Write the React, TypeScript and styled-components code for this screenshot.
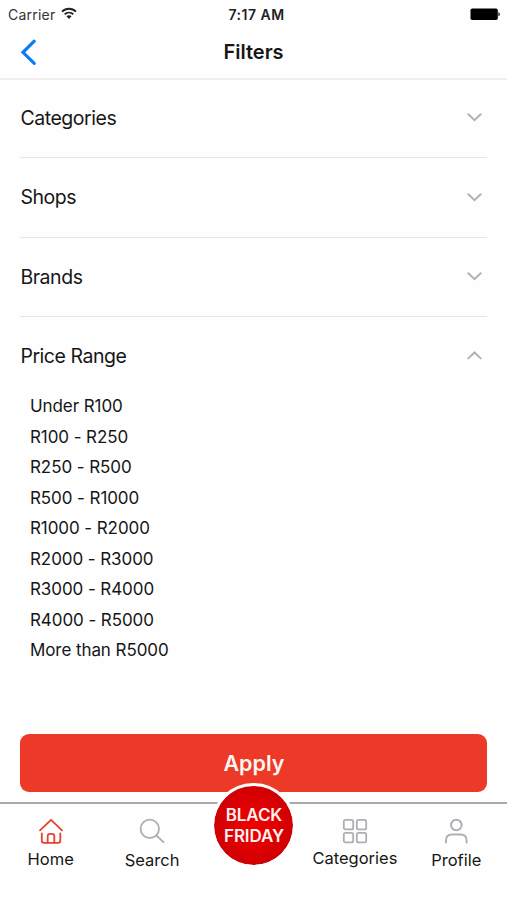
import React, { useState } from "react";
import styled, { createGlobalStyle } from "styled-components";

const GlobalStyle = createGlobalStyle`
  * { box-sizing: border-box; }
  body { margin: 0; background: #fefefe; }
  button { font: inherit; color: inherit; background: none; border: 0; padding: 0; text-align: left; }
`;

const Screen = styled.div`
  width: 507px;
  height: 900px;
  display: flex;
  flex-direction: column;
  overflow: hidden;
  background: #fefefe;
  color: #161616;
  font-family: Inter, "Liberation Sans", sans-serif;
`;

const StatusBar = styled.header`
  flex: none;
  height: 27px;
  display: grid;
  grid-template-columns: 1fr auto 1fr;
  align-items: center;
  padding: 1px 7px 0 8px;
`;

const Carrier = styled.div`
  display: flex;
  align-items: center;
  gap: 6px;
  font-size: 14px;
  letter-spacing: 0.22px;
  color: #333;

  svg {
    margin-top: -2px;
  }
`;

const Clock = styled.div`
  font-size: 14px;
  font-weight: 600;
  letter-spacing: 0.5px;
  color: #222;
  margin-left: 5px;
`;

const Battery = styled.svg`
  justify-self: end;
`;

const NavBar = styled.nav`
  flex: none;
  height: 53px;
  display: grid;
  grid-template-columns: 1fr auto 1fr;
  align-items: center;
  padding: 0 20px;
  padding-bottom: 2px;
  border-bottom: 2px solid #efefef;
`;

const BackButton = styled.button`
  height: 28px;
`;

const Title = styled.h1`
  margin: 0;
  font-size: 20px;
  font-weight: 600;
  line-height: 24px;
`;

const Content = styled.main`
  flex: 1;
  min-height: 0;
  display: flex;
  flex-direction: column;
  padding: 0 19.6px 0 20.4px;
`;

const SectionHeader = styled.button<{ $divided: boolean }>`
  flex: none;
  width: 100%;
  height: 79.3px;
  display: flex;
  align-items: center;
  justify-content: space-between;
  padding: ${(p) => (p.$divided ? "0 5.5px 0 0" : "0 5.5px 2px 0")};
  border-bottom: ${(p) => (p.$divided ? "1px solid #e6e6e8" : "0")};
  font-size: 19.5px;
  letter-spacing: -0.45px;
  line-height: 24px;

  &:first-child {
    height: 78.3px;
    padding-bottom: 2px;
  }
`;

const Options = styled.ul`
  list-style: none;
  margin: -5.3px 0 0;
  padding: 0 0 0 9.6px;
`;

const Option = styled.li`
  height: 30.5px;
  display: flex;
  align-items: center;
  font-size: 17px;
  letter-spacing: -0.08px;
`;

const ApplyButton = styled.button`
  flex: none;
  height: 58px;
  margin-top: auto;
  margin-bottom: 10px;
  border-radius: 9px;
  background: #ed3927;
  color: #fff6f2;
  font-size: 21.5px;
  font-weight: 600;
  text-align: center;
`;

const TabBar = styled.footer`
  flex: none;
  height: 98px;
  display: grid;
  grid-template-columns: repeat(5, 1fr);
  border-top: 2px solid #a9abad;
`;

const Tab = styled.button<{ $gap: number }>`
  display: flex;
  flex-direction: column;
  align-items: center;
  gap: ${(p) => p.$gap}px;
  padding-top: 14px;
  white-space: nowrap;
  font-size: 16.5px;
  line-height: 20px;
  height: 90px;
`;

const PromoSlot = styled.div`
  position: relative;
`;

const PromoBadge = styled.button`
  position: absolute;
  left: 50%;
  top: -21.5px;
  width: 85px;
  height: 85px;
  margin-left: -42px;
  border-radius: 50%;
  border: 3.5px solid #fefefe;
  background: radial-gradient(circle, #f00000 0%, #dc0003 45%, #b80006 100%) border-box;
  background-clip: padding-box;
  display: flex;
  align-items: center;
  justify-content: center;
  text-align: center;
  color: #fff0ee;
  font-size: 17px;
  font-weight: 600;
  letter-spacing: -0.1px;
  line-height: 21px;
  padding-top: 2px;
`;

const SECTIONS = ["Categories", "Shops", "Brands", "Price Range"];
const PRICES = [
  "Under R100",
  "R100 - R250",
  "R250 - R500",
  "R500 - R1000",
  "R1000 - R2000",
  "R2000 - R3000",
  "R3000 - R4000",
  "R4000 - R5000",
  "More than R5000",
];

const WifiIcon = () => (
  <svg width="16" height="13" viewBox="0 0 16 13" fill="none" stroke="#222" strokeWidth="1.9">
    <path d="M1 4.6C5 .7 11 .7 15 4.6" />
    <path d="M3.7 7.3C6.2 5 9.8 5 12.3 7.3" />
    <path d="M8 12 5.5 9.3C7 7.9 9 7.9 10.5 9.3Z" fill="#222" stroke="none" />
  </svg>
);

const Chevron = ({ open }: { open: boolean }) => (
  <svg width="15" height="9" viewBox="0 0 15 9" fill="none" stroke="#b1b1b5" strokeWidth="2" strokeLinecap="round">
    <path d={open ? "M1.3 7.4 7.5 1.5 13.7 7.4" : "M1.3 1.3 7.5 7.2 13.7 1.3"} />
  </svg>
);

const HomeIcon = () => (
  <svg width="26" height="26" viewBox="0 0 26 26" fill="none" stroke="#e5412f" strokeWidth="1.8" strokeLinecap="round" strokeLinejoin="round">
    <path d="M2 12.3 13 1.8 24 12.3" />
    <path d="M3.8 15.5V22.5Q3.8 24.8 6 24.8H20Q22.3 24.8 22.3 22.5V15.5" />
    <path d="M9.7 24.5V18Q9.7 15.8 12 15.8H14Q16.3 15.8 16.3 18V24.5" />
  </svg>
);

const SearchIcon = () => (
  <svg width="26" height="26" viewBox="0 0 26 26" fill="none" stroke="#acafb3" strokeWidth="1.8" strokeLinecap="round">
    <circle cx="10.8" cy="10.8" r="9.2" />
    <path d="M17.5 17.5 24.5 24.2" />
  </svg>
);

const GridIcon = () => (
  <svg width="26" height="26" viewBox="0 0 26 26" fill="none" stroke="#acafb3" strokeWidth="1.8">
    <rect x="1.8" y="1.8" width="9.4" height="9.6" rx="1.7" />
    <rect x="14.8" y="1.8" width="9.4" height="9.6" rx="1.7" />
    <rect x="1.8" y="14.8" width="9.4" height="9.6" rx="1.7" />
    <rect x="14.8" y="14.8" width="9.4" height="9.6" rx="1.7" />
  </svg>
);

const ProfileIcon = () => (
  <svg width="26" height="26" viewBox="0 0 26 26" fill="none" stroke="#acafb3" strokeWidth="1.9" strokeLinecap="round">
    <circle cx="13.3" cy="7" r="5.3" />
    <path d="M3 24.5V22.5Q3 16.5 9 16.5H17.6Q23.6 16.5 23.6 22.5V24.5" />
  </svg>
);

export default function App() {
  const [open, setOpen] = useState("Price Range");

  return (
    <Screen>
      <GlobalStyle />
      <StatusBar>
        <Carrier>
          Carrier
          <WifiIcon />
        </Carrier>
        <Clock>7:17 AM</Clock>
        <Battery width="30" height="13" viewBox="0 0 30 13">
          <rect x=".5" y=".5" width="27.3" height="11.5" rx="1.8" fill="#000" />
          <path d="M28.4 4.3C30.4 4.8 30.4 7.8 28.4 8.3Z" fill="#222" />
        </Battery>
      </StatusBar>
      <NavBar>
        <BackButton aria-label="Back">
          <svg width="18" height="28" viewBox="0 0 18 28" fill="none" stroke="#0a7cf5" strokeWidth="3.2" strokeLinecap="round">
            <path d="M14.2 3.2 3 14.3 14.2 25.3" />
          </svg>
        </BackButton>
        <Title>Filters</Title>
      </NavBar>
      <Content>
        {SECTIONS.map((name) => (
          <SectionHeader
            key={name}
            $divided={name !== "Price Range"}
            onClick={() => setOpen(open === name ? "" : name)}
          >
            {name}
            <Chevron open={open === name} />
          </SectionHeader>
        ))}
        {open === "Price Range" && (
          <Options>
            {PRICES.map((price) => (
              <Option key={price}>{price}</Option>
            ))}
          </Options>
        )}
        <ApplyButton>Apply</ApplyButton>
      </Content>
      <TabBar>
        <Tab $gap={5}>
          <HomeIcon />
          Home
        </Tab>
        <Tab $gap={6}>
          <SearchIcon />
          Search
        </Tab>
        <PromoSlot>
          <PromoBadge>
            BLACK
            <br />
            FRIDAY
          </PromoBadge>
        </PromoSlot>
        <Tab $gap={4}>
          <GridIcon />
          Categories
        </Tab>
        <Tab $gap={5.5}>
          <ProfileIcon />
          Profile
        </Tab>
      </TabBar>
    </Screen>
  );
}
